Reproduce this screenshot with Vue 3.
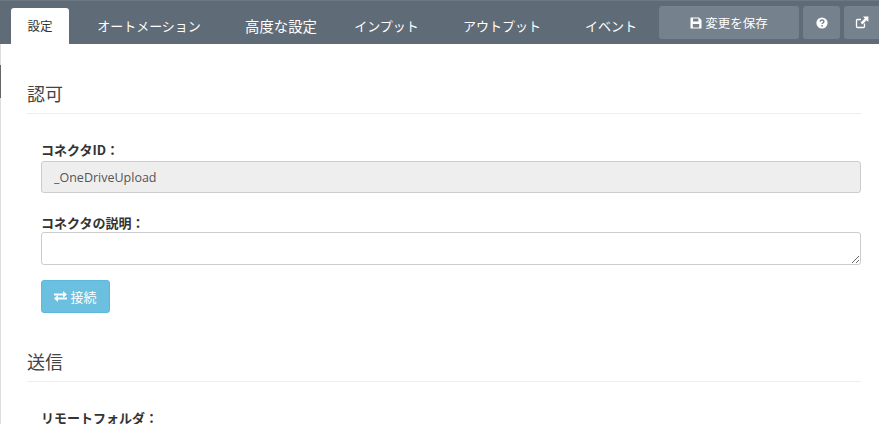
<script setup>
const tabs = [
  { label: '設定', active: true, w: 58, size: 12.5 },
  { label: 'オートメーション', w: 160, size: 13 },
  { label: '高度な設定', w: 104, size: 14.4 },
  { label: 'インプット', w: 107, size: 13 },
  { label: 'アウトプット', w: 124, size: 13 },
  { label: 'イベント', w: 94, size: 13 }
]
</script>

<template>
  <div class="page">
    <header class="bar">
      <nav class="tabs">
        <a v-for="t in tabs" :key="t.label" class="tab" :class="{ active: t.active }" :style="{ width: t.w + 'px', fontSize: t.size + 'px' }">{{ t.label }}</a>
      </nav>
      <div class="actions">
        <button class="act save">
          <svg class="ico" width="12" height="12" viewBox="0 0 12 12"><path fill="#fff" fill-rule="evenodd" d="M1 0.500h8l2.500 2.500v8a.5.5 0 0 1-.5.5H1a.5.5 0 0 1-.5-.5V1A.5.5 0 0 1 1 .5zM3 1.600v3h5.400v-3zM2.800 7v3.400h6.400V7z"/></svg>
          変更を保存
        </button>
        <button class="act help">
          <svg width="12" height="12" viewBox="0 0 12 12"><circle cx="6" cy="6" r="5.600" fill="#fff"/><path d="M4.200 4.700c0-2.200 3.700-2.200 3.700-.1 0 1.400-1.800 1.300-1.800 2.500" fill="none" stroke="#75818c" stroke-width="1.400"/><rect x="5.300" y="8" width="1.600" height="1.500" fill="#75818c"/></svg>
        </button>
        <button class="act ext">
          <svg width="14" height="13" viewBox="0 0 14 13"><path d="M9.500 7.500v3a1 1 0 0 1-1 1h-6a1 1 0 0 1-1-1v-6a1 1 0 0 1 1-1H6" fill="none" stroke="#fff" stroke-width="1.300"/><path d="M8 .6h5.400V6L11.600 4.200 7.400 8.400 5.600 6.600 9.800 2.400z" fill="#fff"/></svg>
        </button>
      </div>
    </header>

    <main class="content">
      <section class="section first">
        <h2 class="title">認可</h2>
        <div class="fields">
          <div class="field">
            <label class="label">コネクタID：</label>
            <input class="control" disabled value="_OneDriveUpload" />
          </div>
          <div class="field second">
            <label class="label">コネクタの説明：</label>
            <textarea class="control area"></textarea>
          </div>
          <button class="connect">
            <svg width="13" height="11" viewBox="0 0 13 11"><path fill="#fff" d="M0 2.500h9V0l4 3.500L9 7V4.600H0zM13 6.400H4V4L0 7.500 4 11V8.500h9z" opacity=".95"/></svg>
            接続
          </button>
        </div>
      </section>

      <section class="section second-section">
        <h2 class="title">送信</h2>
        <div class="fields">
          <div class="field">
            <label class="label">リモートフォルダ：</label>
          </div>
        </div>
      </section>
    </main>
  </div>
</template>

<style>
html, body { margin: 0; background: #fff; }
</style>

<style scoped>
.page {
  width: 879px;
  height: 424px;
  overflow: hidden;
  font-family: "Noto Sans CJK JP", "Open Sans", sans-serif;
  color: #333;
  background: #fff;
}
.bar {
  display: flex;
  justify-content: space-between;
  height: 43px;
  padding-left: 11px;
  background: #5f6b76;
  border-top: 1px solid #6d7882;
}
.tabs { display: flex; align-items: flex-end; height: 44px; margin-top: -1px; }
.tab {
  display: flex;
  justify-content: center;
  align-items: center;
  height: 36px;
  padding-bottom: 2px;
  color: #fff;
  box-sizing: border-box;
}
.tab.active {
  background: #fff;
  color: #333;
  border-radius: 3px 3px 0 0;
}
.actions { display: flex; gap: 4px; padding-top: 5px; margin-right: -3px; }
.act {
  display: flex;
  align-items: center;
  justify-content: center;
  height: 33px;
  border: 0;
  border-radius: 3px;
  background: #75818c;
  color: #fff;
  font: inherit;
  font-size: 12.500px;
  padding: 0;
}
.save { width: 140px; gap: 3px; }
.help { width: 37px; }
.ext { width: 38px; padding-right: 2px; }
.content {
  border-left: 1px solid #ddd;
  padding: 0 18px 0 26px;
  height: 380px;
  position: relative;
}
.content::before {
  content: "";
  position: absolute;
  left: -1px;
  top: 21px;
  width: 1px;
  height: 33px;
  background: #666;
}
.section.first { padding-top: 35px; }
.second-section { padding-top: 34px; }
.title {
  margin: 0;
  height: 34px;
  font-size: 18px;
  font-weight: 400;
  line-height: 28px;
  color: #444;
  border-bottom: 1px solid #eee;
  box-sizing: content-box;
}
.fields { padding: 26px 0 0 14px; }
.field { display: flex; flex-direction: column; }
.second { margin-top: 18px; }
.second .label { line-height: 24px; }
.label {
  font-size: 13px;
  font-weight: 700;
  line-height: 19px;
  color: #333;
  height: 21px;
}
.control {
  display: block;
  box-sizing: border-box;
  width: 820px;
  height: 32px;
  margin: 0;
  padding: 0 12px;
  border: 1px solid #ccc;
  border-radius: 3px;
  background: #fff;
  font-family: "Open Sans", sans-serif;
  font-size: 12.500px;
  color: #555;
}
.control:disabled { background: #eee; color: #555; opacity: 1; }
.area { height: 33px; resize: vertical; }
.connect {
  display: flex;
  align-items: center;
  justify-content: center;
  gap: 3px;
  width: 69px;
  height: 33px;
  margin-top: 15px;
  border: 1px solid #5bb9dc;
  border-radius: 3px;
  background: #6bbfdf;
  color: #fff;
  font: inherit;
  font-size: 13px;
  padding: 0;
}
</style>
